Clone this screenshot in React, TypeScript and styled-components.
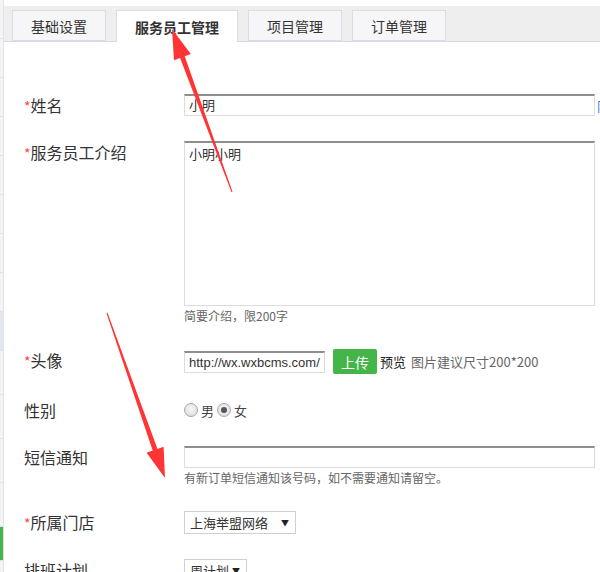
import styled, { createGlobalStyle } from 'styled-components';

const GlobalStyle = createGlobalStyle`
  html, body {
    margin: 0;
    padding: 0;
    background: #fff;
    overflow: hidden;
  }
  body {
    font-family: "Noto Sans CJK SC", "Liberation Sans", sans-serif;
    color: #333;
  }
`;

const Page = styled.div`
  position: relative;
  display: flex;
  width: 600px;
  height: 572px;
  overflow: hidden;
`;

const Sidebar = styled.div`
  width: 3px;
  flex: none;
  display: flex;
  flex-direction: column;
  background: #f4f4f4;
  border-right: 1px solid #dfe3ea;
`;

const SideItem = styled.div<{ $h: number; $color?: string }>`
  height: ${({ $h }) => $h}px;
  flex: none;
  background: ${({ $color }) => $color || 'transparent'};
  border-bottom: 1px solid #e2e2e2;
`;

const Main = styled.div`
  flex: 1;
  min-width: 0;
  display: flex;
  flex-direction: column;
  padding-top: 6px;
`;

const TabBar = styled.div`
  display: flex;
  gap: 10px;
  height: 31px;
  padding: 4px 0 0 8px;
  background: #eeeeee;
  border-bottom: 1px solid #d5dbe4;
`;

const Tab = styled.div<{ $active?: boolean; $w: number }>`
  width: ${({ $w }) => $w}px;
  height: ${({ $active }) => ($active ? 32 : 31)}px;
  box-sizing: border-box;
  display: flex;
  align-items: center;
  justify-content: center;
  font-size: 14px;
  font-weight: ${({ $active }) => ($active ? 700 : 400)};
  color: #333;
  background: ${({ $active }) => ($active ? '#fff' : '#f6f6f8')};
  border: 1px solid #d8dde6;
  border-bottom: ${({ $active }) => ($active ? 'none' : '1px solid #d8dde6')};
  position: relative;
  z-index: 1;
`;

const Form = styled.div`
  padding: 52px 0 0 20px;
  display: flex;
  flex-direction: column;
  gap: 25px;
`;

const Row = styled.div`
  display: flex;
  align-items: flex-start;
`;

const Label = styled.div`
  width: 160px;
  flex: none;
  font-size: 16px;
  line-height: 22px;
  height: 22px;
  color: #333;
  white-space: nowrap;
`;

const Star = styled.span`
  color: #f44;
  font-size: 14px;
`;

const Field = styled.div`
  display: flex;
  flex-direction: column;
`;

const Inline = styled.div`
  display: flex;
  align-items: center;
  white-space: nowrap;
`;

const TextBox = styled.div<{ $w: number; $h?: number }>`
  width: ${({ $w }) => $w}px;
  height: ${({ $h }) => $h || 22}px;
  box-sizing: border-box;
  border: 1px solid #dcdcdc;
  border-top: 2px solid #8e8e8e;
  padding: ${({ $h }) => ($h ? '4px 4px' : '0 4px')};
  font-family: "Liberation Sans", "Noto Sans CJK SC", sans-serif;
  font-size: 13px;
  line-height: ${({ $h }) => ($h ? '16px' : '19px')};
  color: #333;
  overflow: hidden;
  white-space: nowrap;
  flex: none;
`;

const SideHint = styled.span`
  margin-left: 2px;
  color: #3a78c3;
  font-size: 13px;
`;

const Help = styled.div`
  margin-top: 2px;
  font-size: 12px;
  line-height: 16px;
  color: #666;
  white-space: nowrap;
`;

const UploadButton = styled.div`
  margin-left: 8px;
  width: 44px;
  height: 25px;
  display: flex;
  align-items: center;
  justify-content: center;
  background: #44b549;
  border-radius: 2px;
  color: #fff;
  font-size: 14px;
`;

const Preview = styled.span`
  margin-left: 3px;
  font-size: 13px;
  color: #222;
`;

const Suggest = styled.span`
  margin-left: 5px;
  font-size: 13px;
  color: #666;
`;

const RadioGroup = styled.div`
  display: flex;
  align-items: center;
  height: 22px;
  font-size: 13px;
  color: #444;
`;

const Radio = styled.span<{ $checked?: boolean }>`
  width: 12px;
  height: 12px;
  border-radius: 50%;
  border: 1px solid #a8a8a8;
  background: radial-gradient(circle at 50% 40%, #f7f7f7, #d8d8d8);
  display: inline-flex;
  align-items: center;
  justify-content: center;
  margin-right: 3px;
  &::after {
    content: '';
    width: 6px;
    height: 6px;
    border-radius: 50%;
    background: #555;
    display: ${({ $checked }) => ($checked ? 'block' : 'none')};
  }
`;

const RadioText = styled.span`
  margin-right: 3px;
`;

const Select = styled.div<{ $w: number }>`
  width: ${({ $w }) => $w}px;
  height: 23px;
  box-sizing: border-box;
  border: 1px solid #d0d0d0;
  display: flex;
  align-items: center;
  justify-content: space-between;
  padding: 0 6px 0 5px;
  font-size: 13px;
  color: #333;
  white-space: nowrap;
`;

const Caret = styled.span`
  font-size: 8px;
  color: #222;
`;

const Overlay = styled.svg`
  position: absolute;
  left: 0;
  top: 0;
  pointer-events: none;
  z-index: 5;
`;

const sideItems = [
  { h: 38 }, { h: 38 }, { h: 38 }, { h: 38 }, { h: 38 }, { h: 38 }, { h: 38 }, { h: 38 },
  { h: 38, color: '#e4e7ee' }, { h: 43 }, { h: 43 }, { h: 43 }, { h: 43 },
  { h: 33, color: '#44b549' },
];

export default function App() {
  return (
    <>
      <GlobalStyle />
      <Page>
        <Sidebar>
          {sideItems.map((item, i) => (
            <SideItem key={i} $h={item.h} $color={item.color} />
          ))}
        </Sidebar>
        <Main>
          <TabBar>
            <Tab $w={94}>基础设置</Tab>
            <Tab $w={122} $active>服务员工管理</Tab>
            <Tab $w={94}>项目管理</Tab>
            <Tab $w={94}>订单管理</Tab>
          </TabBar>
          <Form>
            <Row>
              <Label><Star>*</Star>姓名</Label>
              <Inline>
                <TextBox $w={411}>小明</TextBox>
                <SideHint>限</SideHint>
              </Inline>
            </Row>
            <Row>
              <Label><Star>*</Star>服务员工介绍</Label>
              <Field>
                <TextBox $w={411} $h={165}>小明小明</TextBox>
                <Help>简要介绍，限200字</Help>
              </Field>
            </Row>
            <Row>
              <Label><Star>*</Star>头像</Label>
              <Inline>
                <TextBox $w={141}>http://wx.wxbcms.com/</TextBox>
                <UploadButton>上传</UploadButton>
                <Preview>预览</Preview>
                <Suggest>图片建议尺寸200*200</Suggest>
              </Inline>
            </Row>
            <Row>
              <Label>性别</Label>
              <RadioGroup>
                <Radio />
                <RadioText>男</RadioText>
                <Radio $checked />
                <RadioText>女</RadioText>
              </RadioGroup>
            </Row>
            <Row>
              <Label>短信通知</Label>
              <Field>
                <TextBox $w={411} />
                <Help>有新订单短信通知该号码，如不需要通知请留空。</Help>
              </Field>
            </Row>
            <Row>
              <Label><Star>*</Star>所属门店</Label>
              <Select $w={112}>
                上海举盟网络
                <Caret>▼</Caret>
              </Select>
            </Row>
            <Row>
              <Label>排班计划</Label>
              <Select $w={63}>
                周计划
                <Caret>▼</Caret>
              </Select>
            </Row>
          </Form>
        </Main>
        <Overlay width="600" height="572" viewBox="0 0 600 572">
          <polygon
            fill="#ff3434"
            points="172,29 190.8,54 184.7,56.2 232.5,191.8 231.5,192.2 180.1,58 174,60.2"
          />
          <polygon
            fill="#ff3434"
            points="165,478 163.6,446.7 157.5,448.9 107.5,312.8 106.5,313.2 152.7,450.5 146.6,452.7"
          />
        </Overlay>
      </Page>
    </>
  );
}
